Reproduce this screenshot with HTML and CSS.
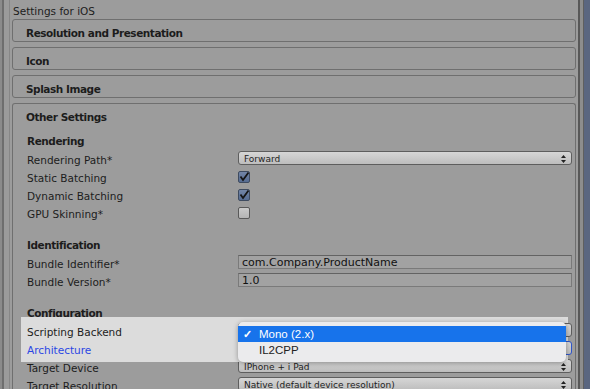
FILE: index.html
```html
<!DOCTYPE html>
<html lang="en">
<head>
  <meta charset="UTF-8">
  <title>Settings for iOS</title>
  <link rel="stylesheet" href="styles.css">
</head>
<body>
  <div class="window">
    <div class="edge-left"></div>

    <div class="inspector">
      <div class="title">Settings for iOS</div>

      <div class="foldout">Resolution and Presentation</div>
      <div class="foldout">Icon</div>
      <div class="foldout">Splash Image</div>

      <div class="foldout open">
        <div class="foldout-head">Other Settings</div>

        <!-- Rendering -->
        <div class="section">
          <div class="section-head">Rendering</div>
          <div class="row">
            <span class="label">Rendering Path*</span>
            <div class="control">
              <div class="popup"><span>Forward</span><svg class="arrows" width="5" height="8" viewBox="0 0 5 8"><path d="M2.5 0 L5 3 H0 Z M2.5 8 L5 5 H0 Z"/></svg></div>
            </div>
          </div>
          <div class="row">
            <span class="label">Static Batching</span>
            <div class="control"><span class="checkbox checked"><svg width="12" height="12" viewBox="0 0 12 12"><path d="M2.5 5.5 L5 9 L10.5 1.5"/></svg></span></div>
          </div>
          <div class="row">
            <span class="label">Dynamic Batching</span>
            <div class="control"><span class="checkbox checked"><svg width="12" height="12" viewBox="0 0 12 12"><path d="M2.5 5.5 L5 9 L10.5 1.5"/></svg></span></div>
          </div>
          <div class="row">
            <span class="label">GPU Skinning*</span>
            <div class="control"><span class="checkbox"></span></div>
          </div>
        </div>

        <!-- Identification -->
        <div class="section">
          <div class="section-head">Identification</div>
          <div class="row">
            <span class="label">Bundle Identifier*</span>
            <div class="control"><div class="field">com.Company.ProductName</div></div>
          </div>
          <div class="row">
            <span class="label">Bundle Version*</span>
            <div class="control"><div class="field">1.0</div></div>
          </div>
        </div>

        <!-- Configuration -->
        <div class="section">
          <div class="section-head">Configuration</div>
          <div class="highlight">
            <div class="row">
              <span class="label">Scripting Backend</span>
              <div class="control">
                <div class="popup"></div>
                <div class="menu">
                  <div class="menu-item selected"><span class="tick">&#10003;</span>Mono (2.x)</div>
                  <div class="menu-item"><span class="tick"></span>IL2CPP</div>
                </div>
              </div>
            </div>
            <div class="row">
              <span class="label link">Architecture</span>
              <div class="control">
                <div class="popup focused"></div>
              </div>
            </div>
          </div>
          <div class="row">
            <span class="label">Target Device</span>
            <div class="control">
              <div class="popup"><span>IPhone + i Pad</span><svg class="arrows" width="5" height="8" viewBox="0 0 5 8"><path d="M2.5 0 L5 3 H0 Z M2.5 8 L5 5 H0 Z"/></svg></div>
            </div>
          </div>
          <div class="row">
            <span class="label">Target Resolution</span>
            <div class="control">
              <div class="popup"><span>Native (default device resolution)</span><svg class="arrows" width="5" height="8" viewBox="0 0 5 8"><path d="M2.5 0 L5 3 H0 Z M2.5 8 L5 5 H0 Z"/></svg></div>
            </div>
          </div>
        </div>
      </div>
    </div>

    <div class="edge-right"></div>
  </div>
</body>
</html>
```

FILE: styles.css
```css
body {
  margin: 0;
  padding: 0;
  background: #9c9c9c;
  font-family: "DejaVu Sans", Verdana, sans-serif;
  font-size: 10.5px;
  color: #1c1c1c;
}

.window {
  display: flex;
  height: 389px;
  overflow: hidden;
}

.edge-left {
  width: 12px;
  flex-shrink: 0;
  background: linear-gradient(to right,
    #8b8b8b 0, #8b8b8b 2px,
    #6e6e6e 2px, #6e6e6e 4px,
    #9b9b9b 4px, #9b9b9b 9px,
    #878787 9px, #878787 10px,
    #9c9c9c 10px);
}

.edge-right {
  width: 14px;
  flex-shrink: 0;
  background: linear-gradient(to right,
    #9c9c9c 0, #9c9c9c 2px,
    #585858 2px, #585858 4px,
    #8d8d8d 4px, #8d8d8d 7px,
    #5f5f5f 7px, #5f5f5f 8px,
    #5a6680 8px);
}

.inspector {
  flex: 1;
  display: flex;
  flex-direction: column;
}

.title {
  box-sizing: border-box;
  height: 21px;
  padding: 3px 0 0 1px;
  line-height: 16px;
}

.foldout {
  box-sizing: border-box;
  height: 23px;
  margin-bottom: 5px;
  border: 1px solid #6f6f6f;
  border-radius: 3px;
  padding: 4px 0 0 13px;
  line-height: 18px;
  font-weight: bold;
  letter-spacing: -0.45px;
}

.foldout.open {
  flex: 1;
  height: auto;
  margin-bottom: 0;
  padding: 0;
  border-bottom: none;
  border-bottom-left-radius: 0;
  border-bottom-right-radius: 0;
  line-height: normal;
  font-weight: normal;
  letter-spacing: normal;
}

.foldout-head {
  box-sizing: border-box;
  height: 23px;
  padding: 3px 0 0 13px;
  line-height: 20px;
  font-weight: bold;
  letter-spacing: -0.45px;
}

.section {
  padding: 2px 3px 10px 14px;
}

.section-head {
  box-sizing: border-box;
  height: 20px;
  padding-top: 3px;
  line-height: 18px;
  font-weight: bold;
  letter-spacing: -0.45px;
}

.row {
  display: flex;
  align-items: center;
  height: 18px;
}

.label {
  width: 211px;
  flex-shrink: 0;
  padding-top: 3px;
  white-space: nowrap;
}

.label.link {
  color: #2b46e4;
}

.control {
  flex: 1;
  display: flex;
  align-items: center;
  position: relative;
}

.popup {
  flex: 1;
  box-sizing: border-box;
  height: 14px;
  display: flex;
  align-items: center;
  justify-content: space-between;
  padding: 1px 5px 0 5px;
  border: 1px solid #5e5e5e;
  border-radius: 3px;
  background: linear-gradient(#d6d6d6, #bdbdbd);
  font-size: 9px;
  color: #1e1e1e;
  white-space: nowrap;
}

.popup.focused {
  border-color: #2f55c9;
}

.arrows {
  fill: #222;
}

.checkbox {
  box-sizing: border-box;
  width: 12px;
  height: 12px;
  margin-top: 1px;
  border: 1px solid #595959;
  border-radius: 2px;
  background: linear-gradient(#cacaca, #b4b4b4);
  display: flex;
}

.checkbox.checked {
  background: linear-gradient(#7285a6, #566c91);
  border-color: #3e4b60;
}

.checkbox svg {
  margin: -1px;
  fill: none;
  stroke: #151515;
  stroke-width: 1.8;
}

.field {
  flex: 1;
  box-sizing: border-box;
  height: 14px;
  padding: 1px 0 0 3px;
  border: 1px solid #7a7a7a;
  border-top-color: #636363;
  background: #a2a2a2;
  font-size: 11px;
  line-height: 12px;
  color: #111;
  white-space: nowrap;
}

.highlight {
  position: relative;
  z-index: 1;
  margin: -4px 4px -5px -6px;
  padding: 4px 0 5px 6px;
  background: #dcdcdc;
}

.highlight .row {
  margin-right: -4px;
}

.menu {
  position: absolute;
  top: -1px;
  left: 0;
  right: 6px;
  padding: 4px 0;
  background: #ebebed;
  border-radius: 5px;
  box-shadow: 0 1px 5px rgba(0, 0, 0, 0.35);
  font-family: "Liberation Sans", Arial, sans-serif;
  font-size: 11.5px;
  color: #222;
  z-index: 2;
}

.menu-item {
  height: 16px;
  line-height: 16px;
  display: flex;
  align-items: center;
}

.menu-item.selected {
  background: #1773eb;
  color: #fff;
}

.tick {
  width: 21px;
  padding-left: 5px;
  box-sizing: border-box;
  font-size: 11px;
  font-weight: bold;
}
```
